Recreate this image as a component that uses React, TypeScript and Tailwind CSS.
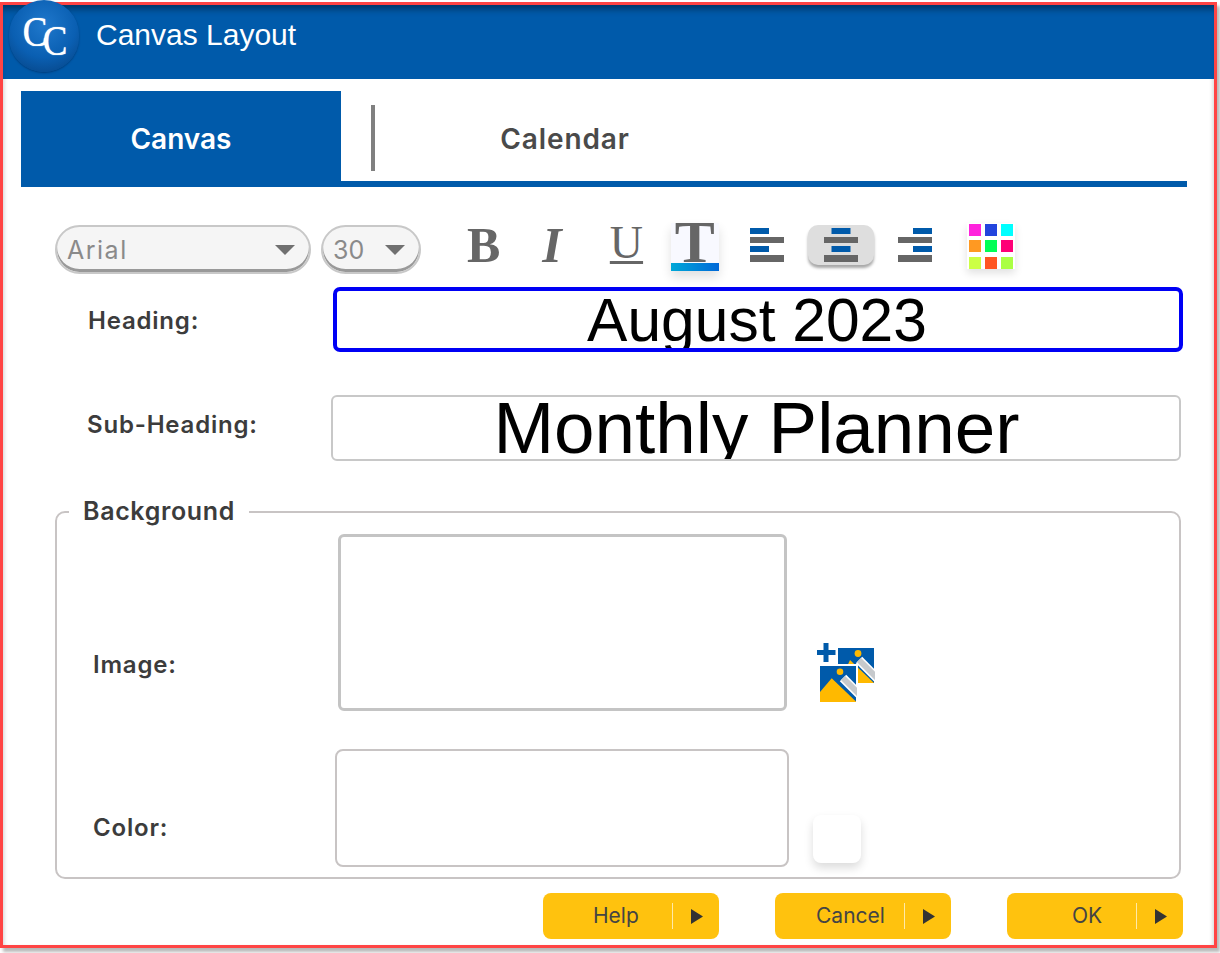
import React from "react";

const ui = "font-['Inter','Open_Sans',sans-serif]";
const labelCls = `${ui} text-[24px] leading-[28px] tracking-[0.8px] font-semibold text-[#3c3c3c]`;

function Logo() {
  return (
    <div className="absolute left-[6px] top-[-5px] w-[70px] h-[72px] rounded-full bg-[radial-gradient(circle_at_50%_35%,#1f78cc_0%,#0a5fb2_55%,#063f7c_100%)] shadow-[0_1px_2px_rgba(0,40,90,0.6)] overflow-hidden">
      <span className="absolute left-[12px] top-[12px] text-[42px] leading-[40px] text-white scale-x-[0.88] [text-shadow:0_0_1px_#fff] font-['Liberation_Serif',serif]">C</span>
      <span className="absolute left-[32px] top-[21px] text-[42px] leading-[40px] text-white scale-x-[0.88] [text-shadow:0_0_1px_#fff] font-['Liberation_Serif',serif]">C</span>
    </div>
  );
}

function Select({ label, width, track }: { label: string; width: string; track: string }) {
  return (
    <div className={`${width} h-[49px] mt-[2px] rounded-full border-2 border-[#c8c8c8] bg-[#f5f5f5] shadow-[inset_0_-3px_0_#999] flex items-center justify-between pl-[10px] pr-[14px]`}>
      <span className={`${ui} text-[25px] leading-none pt-[1px] text-[#8a8a8a] ${track}`}>{label}</span>
      <svg width="20" height="10" viewBox="0 0 20 10"><path d="M0 0H20L10 10Z" fill="#707070" /></svg>
    </div>
  );
}

function AlignIcon({ blueX }: { blueX: number }) {
  return (
    <svg width="34" height="34" viewBox="0 0 34 34" className="block">
      <rect x={blueX} y="0" width="19" height="6" fill="#005aaa" />
      <rect x="0" y="9" width="34" height="6" fill="#666" />
      <rect x={blueX} y="18" width="19" height="6" fill="#005aaa" />
      <rect x="0" y="27" width="34" height="7" fill="#666" />
    </svg>
  );
}

function AddImages() {
  const stripe = (d: string) => (
    <>
      <path d={d} stroke="#fff" strokeWidth="9" fill="none" />
      <path d={d} stroke="#c6c9cc" strokeWidth="6" fill="none" />
    </>
  );
  return (
    <svg width="58" height="59" viewBox="0 0 58 59" className="block">
      <path d="M6.5 0h5v7h7v5h-7v7h-5v-7H0V7h6.5Z" fill="#005aaa" />
      <rect x="21" y="5" width="36" height="35" fill="#005aaa" />
      <circle cx="41" cy="10.5" r="3.4" fill="#ffb900" />
      <path d="M27 30 33 17 57 40H40Z" fill="#ffb900" />
      {stripe("M42 17 60 35")}
      <rect x="1" y="21" width="40" height="38" fill="#fff" />
      <rect x="3" y="23" width="36" height="36" fill="#005aaa" />
      <circle cx="23" cy="28.7" r="3.3" fill="#ffb900" />
      <path d="M3 49 14.7 35.3 39 58.5V59H3Z" fill="#ffb900" />
      <clipPath id="fc"><rect x="3" y="23" width="37" height="36" /></clipPath>
      <g clipPath="url(#fc)">{stripe("M26 35 42 51")}</g>
    </svg>
  );
}

function Btn({ label, pl, ml }: { label: string; pl: string; ml: string }) {
  return (
    <button className={`${ml} w-[176px] h-[46px] rounded-[8px] bg-[#ffc20e] flex items-center relative ${ui} text-[#444] text-[21px] font-normal`}>
      <span className={`absolute ${pl} top-[10px] leading-[26px]`}>{label}</span>
      <span className="absolute left-[129px] top-[10px] w-[1px] h-[26px] bg-[#ffe9a8]" />
      <svg className="absolute left-[148px] top-[16px]" width="12" height="15" viewBox="0 0 12 15"><path d="M0 0 12 7.5 0 15Z" fill="#333" /></svg>
    </button>
  );
}

const colors = ["#ff22dd", "#2244dd", "#00ffff", "#ff9922", "#00ff55", "#ff0077", "#ccff44", "#ff5522", "#aaff44"];

export default function App() {
  return (
    <div className="w-[1220px] h-[953px] bg-white overflow-hidden">
      <div className="relative mt-[2px] w-[1217px] h-[946px] border-[3px] border-[#ff4444] flex flex-col bg-white shadow-[3px_4px_3px_rgba(0,0,0,0.28),inset_4px_0_4px_-3px_rgba(0,0,0,0.18),inset_-4px_0_4px_-3px_rgba(0,0,0,0.18)]">
        {/* Title bar */}
        <div className="relative h-[74px] shrink-0 bg-[#005aaa] shadow-[inset_0_8px_7px_-4px_rgba(0,0,0,0.4)] flex items-start pl-[93px] pt-[10px]">
          <span className="text-[30px] leading-[40px] text-white font-['Liberation_Sans',Arial,sans-serif]">Canvas Layout</span>
        </div>
        <Logo />

        {/* Tabs */}
        <div className="ml-[18px] mt-[12px] w-[1166px] h-[96px] border-b-[6px] border-[#005aaa] flex">
          <div className={`${ui} w-[320px] h-[96px] bg-[#005aaa] text-white text-[28px] font-semibold flex items-center justify-center`}>Canvas</div>
          <div className="ml-[30px] mt-[14px] w-[4px] h-[66px] bg-[#808080]" />
          <div className={`${ui} w-[380px] h-[90px] pt-[32px] text-center text-[28px] leading-[32px] tracking-[0.9px] font-semibold text-[#4a4a4a]`}>Calendar</div>
        </div>

        {/* Toolbar */}
        <div className="ml-[52px] mt-[36px] h-[51px] flex items-start text-[#666] font-['Liberation_Serif',serif]">
          <Select label="Arial" width="w-[256px]" track="tracking-[1.5px]" />
          <div className="ml-[10px]"><Select label="30" width="w-[100px]" track="" /></div>
          <span className="ml-[46px] mt-[-3px] text-[50px] leading-[50px] font-bold">B</span>
          <span className="ml-[42px] mt-[-3px] text-[50px] leading-[50px] font-bold italic">I</span>
          <span className="ml-[48px] mt-[-3px] w-[33px] text-[46px] leading-[46px] underline decoration-[3px] underline-offset-[3px]">U</span>
          <div className="relative ml-[28px] w-[48px] h-[48px] bg-[#f8f9ff] shadow-[0_6px_10px_rgba(0,0,0,0.12)] flex justify-center">
            <span className="text-[60px] leading-[50px] font-bold mt-[-6px]">T</span>
            <div className="absolute left-0 bottom-0 w-full h-[8px] bg-[linear-gradient(90deg,#00a8d8,#0068d8)]" />
          </div>
          <div className="ml-[31px] mt-[5px]"><AlignIcon blueX={0} /></div>
          <div className="ml-[24px] mt-[2px] w-[66px] h-[40px] rounded-[10px] bg-[#dedede] shadow-[0_3px_3px_rgba(0,0,0,0.35)] flex items-center justify-center"><AlignIcon blueX={7.5} /></div>
          <div className="ml-[24px] mt-[5px]"><AlignIcon blueX={15} /></div>
          <div className="ml-[35px] w-[48px] h-[46px] bg-white shadow-[0_4px_8px_rgba(0,0,0,0.12)] grid grid-cols-3 gap-x-[4px] gap-y-[4px] px-[2px] pt-[1px]">
            {colors.map((c) => (
              <span key={c} className="h-[12px] w-[12px]" style={{ backgroundColor: c }} />
            ))}
          </div>
        </div>

        {/* Heading */}
        <div className="ml-[85px] mt-[13px] flex items-start">
          <label className={`${labelCls} w-[245px] mt-[20px]`}>Heading:</label>
          <div className="w-[850px] h-[65px] border-[4px] border-[#0000f5] rounded-[7px] overflow-hidden pr-[2px] text-center text-black text-[60.5px] leading-[58px] font-['Liberation_Sans',Arial,sans-serif]">August 2023</div>
        </div>

        {/* Sub-heading */}
        <div className="ml-[84px] mt-[43px] flex items-start">
          <label className={`${labelCls} w-[244px] mt-[16px]`}>Sub-Heading:</label>
          <div className="w-[850px] h-[66px] border-2 border-[#c8c8c8] rounded-[6px] overflow-hidden pl-[1px] text-center text-black text-[72.8px] leading-[62px] font-['Liberation_Sans',Arial,sans-serif]">Monthly Planner</div>
        </div>

        {/* Background */}
        <fieldset className="ml-[52px] mt-[37px] w-[1126px] h-[381px] border-2 border-[#c8c4c4] rounded-[10px]">
          <legend className={`${ui} ml-[12px] px-[14px] h-[28px] text-[25px] leading-[26px] tracking-[0.65px] font-semibold text-[#3c3c3c]`}>Background</legend>
          <div className="mt-[8px] ml-[36px] flex items-start">
            <label className={`${labelCls} w-[245px] mt-[117px]`}>Image:</label>
            <div className="w-[449px] h-[177px] border-[3px] border-[#c4c4c4] rounded-[6px]" />
            <div className="ml-[30px] mt-[109px]"><AddImages /></div>
          </div>
          <div className="mt-[38px] ml-[36px] flex items-start">
            <label className={`${labelCls} w-[242px] mt-[65px]`}>Color:</label>
            <div className="w-[454px] h-[118px] border-2 border-[#c8c4c4] rounded-[8px]" />
            <div className="ml-[24px] mt-[66px] w-[48px] h-[48px] rounded-[8px] bg-white shadow-[0_5px_10px_rgba(0,0,0,0.14)]" />
          </div>
        </fieldset>

        {/* Buttons */}
        <div className="ml-[540px] mt-[14px] flex">
          <Btn label="Help" pl="left-[50px]" ml="" />
          <Btn label="Cancel" pl="left-[41px]" ml="ml-[56px]" />
          <Btn label="OK" pl="left-[65px]" ml="ml-[56px]" />
        </div>
      </div>
    </div>
  );
}
